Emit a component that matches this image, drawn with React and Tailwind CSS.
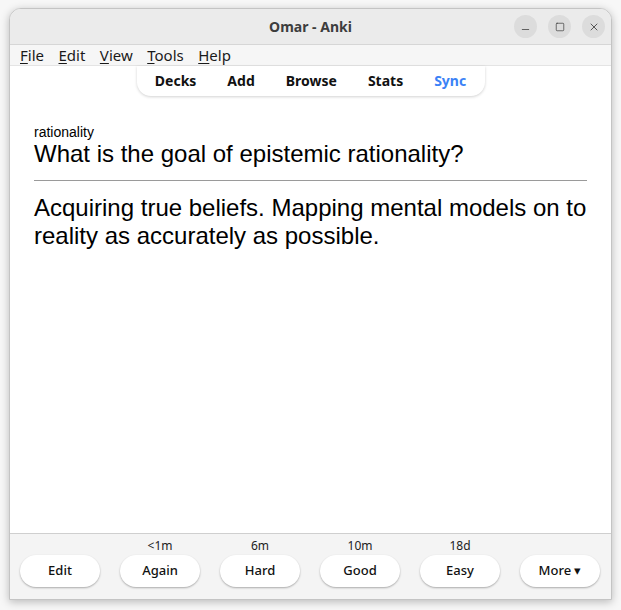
import { Minus, Square, X } from "lucide-react";

const ui = { fontFamily: '"Noto Sans", "Open Sans", sans-serif' };
const card = { fontFamily: '"Liberation Sans", Arial, sans-serif' };

const answers = [
    { label: "Edit", due: "" },
    { label: "Again", due: "<1m" },
    { label: "Hard", due: "6m" },
    { label: "Good", due: "10m" },
    { label: "Easy", due: "18d" },
    { label: "More ▾", due: "" },
];

const Menu = ({ name }) => (
    <span>
        <span className="underline underline-offset-2">{name[0]}</span>
        {name.slice(1)}
    </span>
);

const App = () => {
    return (
        <div className="w-[621px] h-[610px] bg-[#f7f7f7] pt-[8px] pl-[9px]" style={ui}>
            <div className="w-[603px] h-[592px] flex flex-col bg-white border border-[#c4c4c4] rounded-t-[12px] shadow-[0_2px_8px_rgba(0,0,0,0.25)] overflow-hidden">

                {/* Title bar */}
                <div className="h-[36px] shrink-0 bg-[#ebebeb] border-b border-[#d6d6d6] flex items-center relative">
                    <div className="flex-1 text-center text-[14px] font-bold text-[#3d3d3d]">
                        Omar - Anki
                    </div>
                    <div className="absolute right-[6px] top-[6px] flex gap-[11px]">
                        <div className="w-[23px] h-[23px] rounded-full bg-[#dcdcdc] flex items-center justify-center">
                            <Minus size={11} strokeWidth={1.6} className="text-[#333] mt-[5px]" />
                        </div>
                        <div className="w-[23px] h-[23px] rounded-full bg-[#dcdcdc] flex items-center justify-center">
                            <Square size={10} strokeWidth={1.6} className="text-[#333]" />
                        </div>
                        <div className="w-[23px] h-[23px] rounded-full bg-[#dcdcdc] flex items-center justify-center">
                            <X size={12} strokeWidth={1.6} className="text-[#333]" />
                        </div>
                    </div>
                </div>

                {/* Menu bar */}
                <div className="h-[21px] shrink-0 bg-[#f6f6f6] border-b border-[#e4e4e4] flex items-center gap-[14.5px] pl-[10px] text-[15px] text-[#1a1a1a] leading-none">
                    <Menu name="File" />
                    <Menu name="Edit" />
                    <Menu name="View" />
                    <Menu name="Tools" />
                    <Menu name="Help" />
                </div>

                {/* Toolbar */}
                <div className="flex justify-center shrink-0">
                    <div className="w-[348px] h-[30px] bg-white rounded-b-[14px] shadow-[0_1px_3px_rgba(0,0,0,0.18)] flex items-center justify-center gap-[31px] text-[14px] font-bold text-[#111]">
                        <span className="-mt-[2px]">Decks</span>
                        <span className="-mt-[2px]">Add</span>
                        <span className="-mt-[2px]">Browse</span>
                        <span className="-mt-[2px]">Stats</span>
                        <span className="-mt-[2px] text-[#3b82f6]">Sync</span>
                    </div>
                </div>

                {/* Card */}
                <div className="flex-1 px-[24px] pt-[28px]" style={card}>
                    <div className="text-[14px] leading-[16px] text-black">rationality</div>
                    <div className="text-[24px] leading-[28px] text-black">
                        What is the goal of epistemic rationality?
                    </div>
                    <div className="h-px bg-[#9a9a9a] mt-[12px] mb-[13px]" />
                    <div className="text-[24px] leading-[28px] text-black">
                        Acquiring true beliefs. Mapping mental models on to reality as accurately as possible.
                    </div>
                </div>

                {/* Answer bar */}
                <div className="h-[66px] shrink-0 bg-[#f4f4f4] border-t border-[#cfcfcf] flex gap-[20px] pl-[10px] pt-[3px]">
                    {answers.map((a) => (
                        <div key={a.label} className="w-[80px] flex flex-col items-center">
                            <div className="h-[17px] text-[12px] leading-[17px] text-[#222]">{a.due}</div>
                            <div className="w-[80px] h-[32px] mt-[1px] rounded-full bg-white shadow-[0_1px_2px_rgba(0,0,0,0.3)] flex items-center justify-center text-[13px] font-medium text-[#111]">
                                {a.label}
                            </div>
                        </div>
                    ))}
                </div>
            </div>
        </div>
    );
};

export default App;
